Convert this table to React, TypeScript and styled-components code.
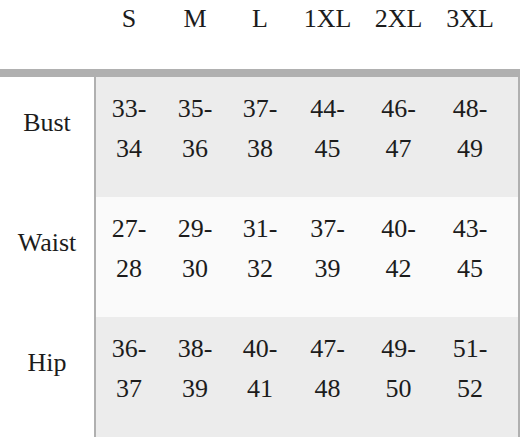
import styled, { createGlobalStyle } from "styled-components";

const GlobalStyle = createGlobalStyle`
    body {
        margin: 0;
        background: #ffffff;
        color: #1c1c1c;
    }
`;

const SIZES = ["S", "M", "L", "1XL", "2XL", "3XL"];

const ROWS = [
    { label: "Bust", values: [["33-", "34"], ["35-", "36"], ["37-", "38"], ["44-", "45"], ["46-", "47"], ["48-", "49"]] },
    { label: "Waist", values: [["27-", "28"], ["29-", "30"], ["31-", "32"], ["37-", "39"], ["40-", "42"], ["43-", "45"]] },
    { label: "Hip", values: [["36-", "37"], ["38-", "39"], ["40-", "41"], ["47-", "48"], ["49-", "50"], ["51-", "52"]] },
];

export default function App() {
    return (
        <>
            <GlobalStyle />
            <Table>
                <HeadRow>
                    <LabelCell />
                    <Sizes>
                        {SIZES.map(s => <HeadCell key={s}>{s}</HeadCell>)}
                    </Sizes>
                </HeadRow>
                {ROWS.map((row, i) => (
                    <BodyRow key={row.label}>
                        <RowLabel>{row.label}</RowLabel>
                        <Values $alt={i % 2 === 1}>
                            {row.values.map((v, j) => (
                                <ValueCell key={j}>
                                    <span>{v[0]}</span>
                                    <span>{v[1]}</span>
                                </ValueCell>
                            ))}
                        </Values>
                    </BodyRow>
                ))}
            </Table>
        </>
    );
}

const Table = styled.div`
    width: 520px;
    font-family: "Liberation Serif", "Times New Roman", "DejaVu Serif", serif;
    font-size: 26px;
    color: #1c1c1c;
`;

const HeadRow = styled.div`
    display: flex;
    height: 69px;
    border-bottom: 8px solid #b0b0b0;
`;

const LabelCell = styled.div`
    width: 96px;
    flex-shrink: 0;
`;

const Sizes = styled.div`
    display: grid;
    grid-template-columns: 66px 66px 64px 71px 71px 72px;
    padding-right: 12px;
    flex: 1;
`;

const HeadCell = styled.div`
    text-align: center;
    line-height: 27px;
    padding-top: 5px;
`;

const BodyRow = styled.div`
    display: flex;
    height: 120px;
`;

const RowLabel = styled.div`
    width: 94px;
    flex-shrink: 0;
    border-right: 2px solid #b0b0b0;
    text-align: center;
    line-height: 40px;
    padding-top: 26px;
`;

const Values = styled.div<{ $alt: boolean }>`
    flex: 1;
    display: grid;
    grid-template-columns: 66px 66px 64px 71px 71px 72px;
    align-items: start;
    padding: 12px 10px 0 0;
    background: ${p => (p.$alt ? "#fafafa" : "#ececec")};
    border-right: 2px solid #b0b0b0;
`;

const ValueCell = styled.div`
    display: flex;
    flex-direction: column;
    align-items: center;
    line-height: 40px;
`;
